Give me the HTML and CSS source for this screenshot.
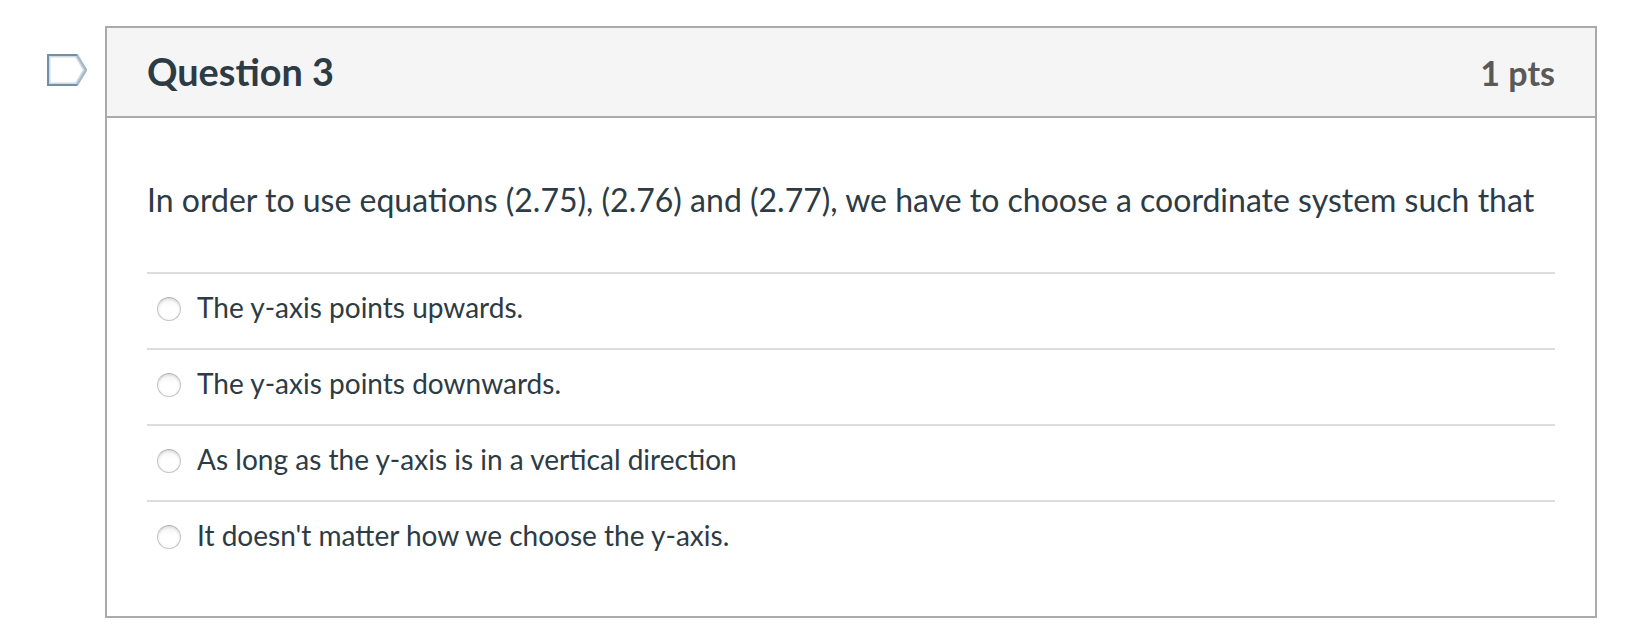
FILE: index.html
```html
<!DOCTYPE html>
<html lang="en">
<head>
  <meta charset="UTF-8">
  <meta name="viewport" content="width=device-width, initial-scale=1.0">
  <title>Question 3</title>
  <link rel="stylesheet" href="styles.css">
</head>
<body>
  <div class="question-holder">
    <button class="flag-question" aria-label="Flag question">
      <svg width="40" height="32" viewBox="0 0 40 32">
        <path class="flag-glow" d="M2.5 2.5H29L37 16L29 29.5H2.5Z"/>
        <path class="flag-side" d="M30 1L39 16L30 31"/>
        <path class="flag-line" d="M30.5 1H1V31H30.5"/>
      </svg>
    </button>

    <div class="question">
      <div class="header">
        <h2 class="name">Question 3</h2>
        <span class="points">1 pts</span>
      </div>
      <div class="text">
        <p class="question-text">In order to use equations (2.75), (2.76) and (2.77), we have to choose a coordinate system such that</p>
        <div class="answers">
          <label class="answer">
            <input type="radio" name="question_3" class="radio">
            <span class="answer-label">The y-axis points upwards.</span>
          </label>
          <label class="answer">
            <input type="radio" name="question_3" class="radio">
            <span class="answer-label">The y-axis points downwards.</span>
          </label>
          <label class="answer">
            <input type="radio" name="question_3" class="radio">
            <span class="answer-label">As long as the y-axis is in a vertical direction</span>
          </label>
          <label class="answer">
            <input type="radio" name="question_3" class="radio">
            <span class="answer-label">It doesn't matter how we choose the y-axis.</span>
          </label>
        </div>
      </div>
    </div>
  </div>
</body>
</html>
```
FILE: styles.css
```css
* {
  box-sizing: border-box;
}

body {
  margin: 0;
  background-color: #fff;
  color: #2d3b45;
  font-family: Lato, "Helvetica Neue", Arial, sans-serif;
  font-size: 32px;
}

.question-holder {
  display: flex;
  align-items: flex-start;
  padding: 26px 48px 14px 47px;
}

.flag-question {
  width: 40px;
  height: 32px;
  margin: 28px 18px 0 0;
  padding: 0;
  border: none;
  background: none;
  cursor: pointer;
}

.flag-question svg {
  display: block;
  fill: none;
}

.flag-line {
  stroke: #7190a7;
  stroke-width: 2;
}

.flag-side {
  stroke: #a3b8c8;
  stroke-width: 2.4;
}

.flag-glow {
  stroke: #cfdae2;
  stroke-width: 2;
}

.question {
  flex: 1;
  height: 592px;
  border: 2px solid #aaa;
}

.header {
  display: flex;
  align-items: baseline;
  justify-content: space-between;
  height: 90px;
  padding: 19px 40px 0;
  background-color: #f5f5f5;
  border-bottom: 2px solid #aaa;
}

.name {
  margin: 0;
  font-size: 37.8px;
  font-weight: bold;
  line-height: 50px;
}

.points {
  color: #595959;
  font-size: 34px;
  font-weight: bold;
  line-height: 50px;
}

.text {
  padding: 58px 40px 0;
}

.question-text {
  margin: 0 0 48px;
  font-size: 32.03px;
  line-height: 48px;
  white-space: nowrap;
}

.answer {
  display: flex;
  align-items: center;
  height: 76px;
  padding: 0 8px 4px;
  border-top: 2px solid #ddd;
  font-size: 28.04px;
  line-height: 40px;
  cursor: pointer;
}

.answer-label {
  padding-bottom: 4px;
}

.radio {
  appearance: none;
  width: 24px;
  height: 24px;
  margin: 0 16px 0 2px;
  border: 1px solid #c4c4c4;
  border-top-color: #b0b0b0;
  border-radius: 50%;
  background: linear-gradient(#f4f4f4, #fff 45%);
  box-shadow: inset 0 1px 3px rgba(0, 0, 0, 0.14);
}
```
